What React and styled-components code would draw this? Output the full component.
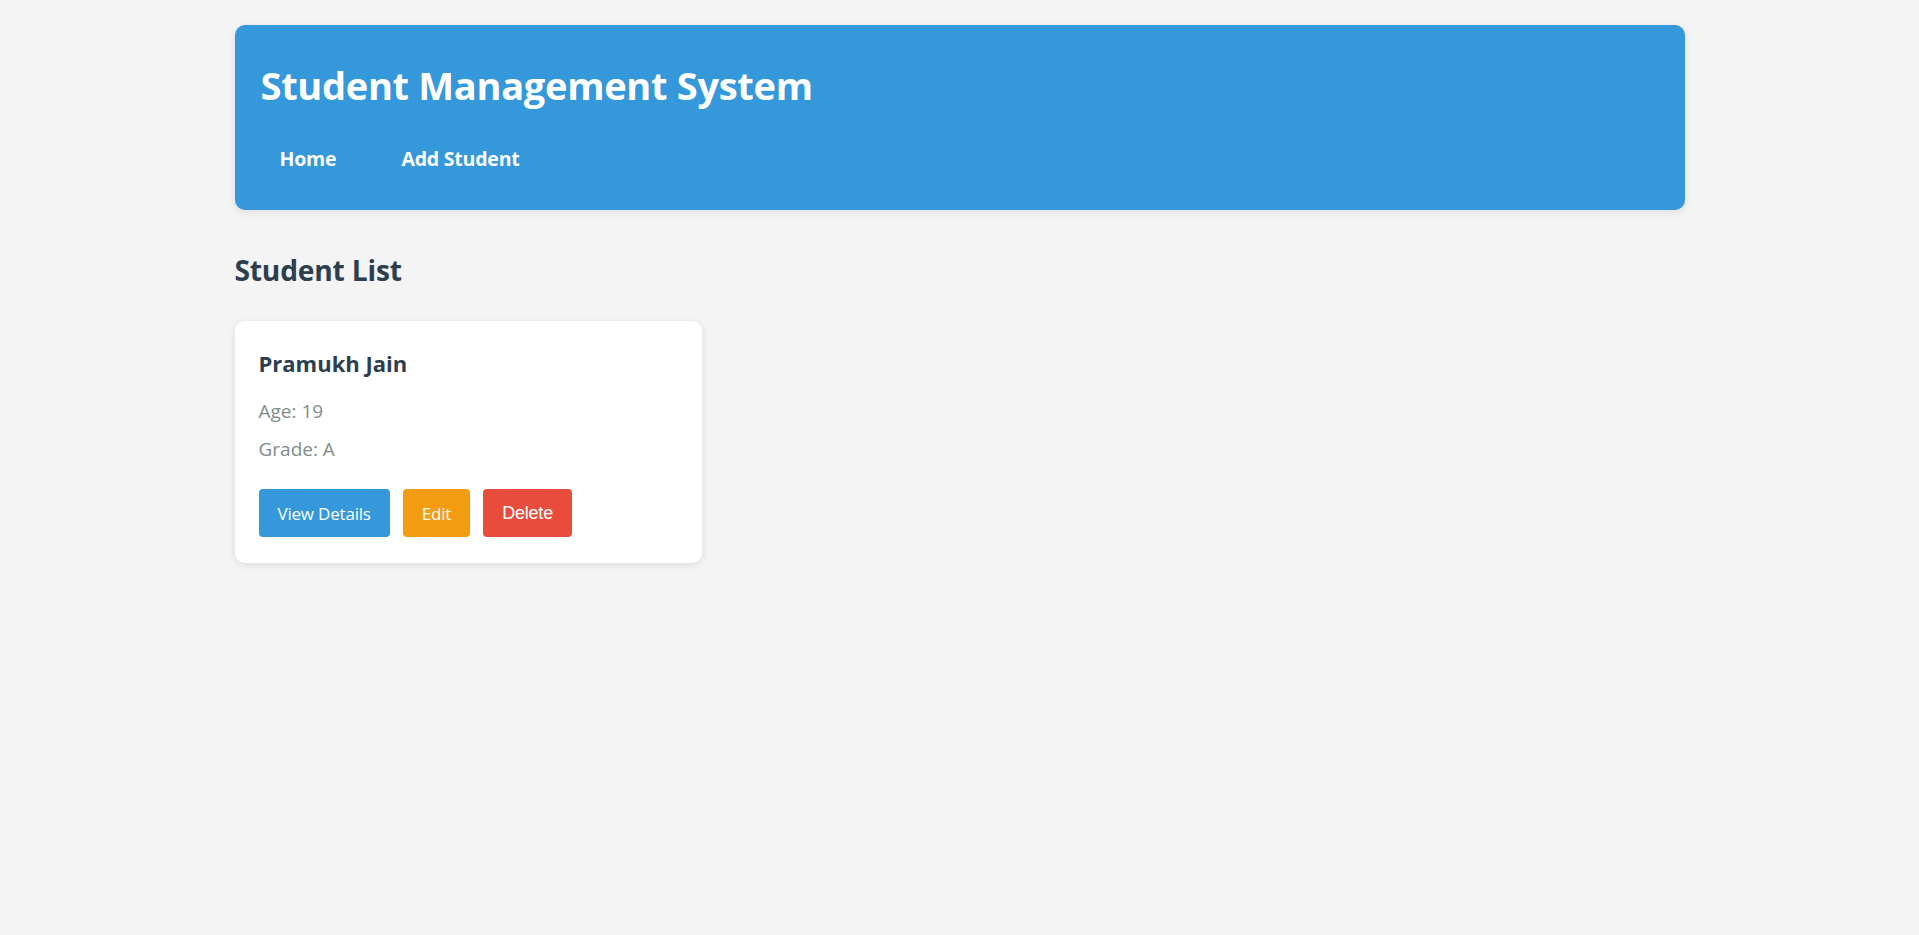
import React from "react";
import styled, { createGlobalStyle } from "styled-components";

const Global = createGlobalStyle`
  html, body { margin: 0; padding: 0; background: #f4f4f4; }
  body { font-family: "Open Sans", "Noto Sans", sans-serif; color: #333; }
  * { box-sizing: border-box; }
`;

const Container = styled.div`
  max-width: 1450px;
  margin: 0 auto;
  padding: 25px 0;
`;

const Header = styled.header`
  background: #3498db;
  color: #fff;
  border-radius: 10px;
  padding: 32px 26px 0;
  height: 185px;
  box-shadow: 0 2px 8px rgba(0, 0, 0, 0.1);
`;

const Title = styled.h1`
  margin: 0;
  font-size: 38px;
  line-height: 56px;
  font-weight: 700;
  letter-spacing: -0.3px;
`;

const Nav = styled.nav`
  display: flex;
  gap: 27px;
  margin-top: 32px;
`;

const NavLink = styled.a`
  color: #fff;
  text-decoration: none;
  font-weight: 700;
  font-size: 19.5px;
  line-height: 28px;
  padding: 0 19px;
  letter-spacing: -0.2px;
`;

const SectionTitle = styled.h2`
  margin: 40px 0 31px;
  font-size: 28.2px;
  line-height: 40px;
  font-weight: 700;
  color: #2c3e50;
  letter-spacing: -0.2px;
`;

const Grid = styled.div`
  display: grid;
  grid-template-columns: repeat(auto-fill, 467px);
  gap: 24px;
`;

const Card = styled.div`
  background: #fff;
  border-radius: 10px;
  padding: 28px 24px 26px;
  box-shadow: 0 2px 8px rgba(0, 0, 0, 0.1);
`;

const Name = styled.h3`
  margin: 0 0 15px;
  font-size: 22px;
  line-height: 28px;
  font-weight: 700;
  color: #2c3e50;
`;

const Info = styled.p`
  margin: 0;
  font-size: 19px;
  line-height: 38px;
  color: #7f8c8d;
`;

const Actions = styled.div`
  display: flex;
  gap: 13px;
  margin-top: 21px;
`;

const Button = styled.button`
  border: none;
  border-radius: 4px;
  height: 48px;
  padding: 0 19px;
  background: ${(p) => p.$bg};
  color: #fff;
  font-family: ${(p) => (p.$arial ? '"Liberation Sans", Arial, sans-serif' : '"Open Sans", "Noto Sans", sans-serif')};
  font-size: ${(p) => (p.$arial ? 18 : 17)}px;
  cursor: pointer;
  letter-spacing: -0.2px;
`;

export default function App() {
  return (
    <>
      <Global />
      <Container>
        <Header>
          <Title>Student Management System</Title>
          <Nav>
            <NavLink href="#">Home</NavLink>
            <NavLink href="#">Add Student</NavLink>
          </Nav>
        </Header>
        <SectionTitle>Student List</SectionTitle>
        <Grid>
          <Card>
            <Name>Pramukh Jain</Name>
            <Info>Age: 19</Info>
            <Info>Grade: A</Info>
            <Actions>
              <Button $bg="#3498db">View Details</Button>
              <Button $bg="#f39c12">Edit</Button>
              <Button $bg="#e74c3c" $arial>Delete</Button>
            </Actions>
          </Card>
        </Grid>
      </Container>
    </>
  );
}
